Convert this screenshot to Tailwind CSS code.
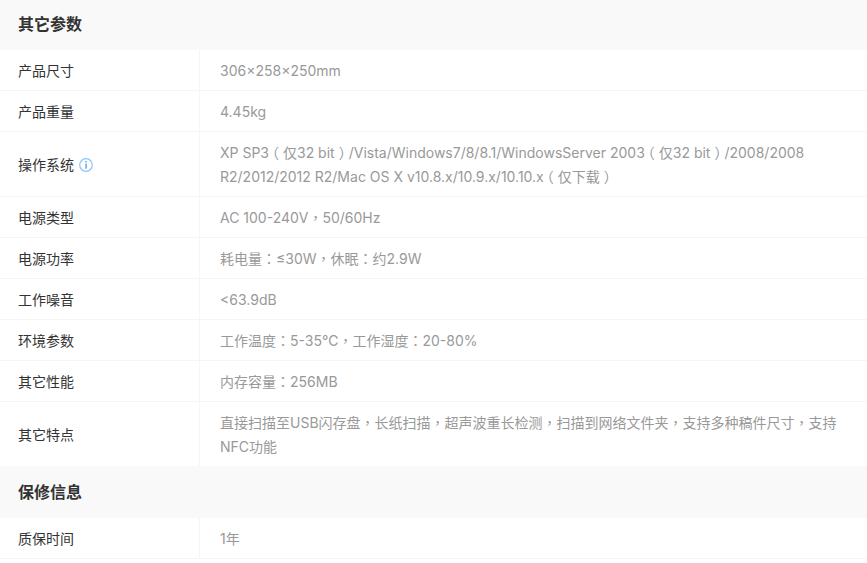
<!DOCTYPE html>
<html lang="zh-CN">
<head>
  <meta charset="UTF-8" />
  <title>参数</title>
  <script src="https://cdn.jsdelivr.net/npm/@tailwindcss/browser@4"></script>
</head>
<body class="bg-white font-['Inter','Noto_Sans_CJK_SC',sans-serif] text-[14px] leading-6 overflow-hidden">
  <h3 class="bg-[#f9f9f9] h-[50px] pl-[18px] pb-[2px] flex items-center text-[16px] font-bold text-[#333]">其它参数</h3>
  <div class="flex border-b border-[#f5f5f5]">
    <div class="w-[200px] shrink-0 pl-[18px] pt-[2px] flex items-center text-[#333] border-r border-[#f5f5f5]">产品尺寸</div>
    <div class="flex-1 pl-5 pr-[30px] pt-[9px] pb-[7px] text-[#999]">306×258×250mm</div>
  </div>
  <div class="flex border-b border-[#f5f5f5]">
    <div class="w-[200px] shrink-0 pl-[18px] pt-[2px] flex items-center text-[#333] border-r border-[#f5f5f5]">产品重量</div>
    <div class="flex-1 pl-5 pr-[30px] pt-[9px] pb-[7px] text-[#999]">4.45kg</div>
  </div>
  <div class="flex border-b border-[#f5f5f5]">
    <div class="w-[200px] shrink-0 pl-[18px] pt-[2px] flex items-center text-[#333] border-r border-[#f5f5f5]">
      操作系统
      <svg class="ml-[5px] w-[14px] h-[14px]" viewBox="0 0 14 14" fill="none">
        <circle cx="7" cy="7" r="6.3" stroke="#8cc4fb" stroke-width="1.2" />
        <rect x="6.3" y="3" width="1.5" height="1.5" fill="#5ea8f5" />
        <rect x="6.3" y="5.5" width="1.5" height="5.2" fill="#5ea8f5" />
      </svg>
    </div>
    <div class="flex-1 pl-5 pr-[30px] pt-[9px] pb-[7px] text-[#999]">XP SP3<span class="relative left-[-4px]">（</span>仅32 bit<span class="relative left-[4px]">）</span>/Vista/Windows7/8/8.1/WindowsServer 2003<span class="relative left-[-4px]">（</span>仅32 bit<span class="relative left-[4px]">）</span>/2008/2008 R2/2012/2012 R2/Mac OS X v10.8.x/10.9.x/10.10.x<span class="relative left-[-4px]">（</span>仅下载<span class="relative left-[4px]">）</span></div>
  </div>
  <div class="flex border-b border-[#f5f5f5]">
    <div class="w-[200px] shrink-0 pl-[18px] pt-[2px] flex items-center text-[#333] border-r border-[#f5f5f5]">电源类型</div>
    <div class="flex-1 pl-5 pr-[30px] pt-[9px] pb-[7px] text-[#999]">AC 100-240V<span lang="zh-TW" class="leading-none font-['Noto_Sans_CJK_TC']">，</span>50/60Hz</div>
  </div>
  <div class="flex border-b border-[#f5f5f5]">
    <div class="w-[200px] shrink-0 pl-[18px] pt-[2px] flex items-center text-[#333] border-r border-[#f5f5f5]">电源功率</div>
    <div class="flex-1 pl-5 pr-[30px] pt-[9px] pb-[7px] text-[#999]">耗电量<span lang="zh-TW" class="leading-none font-['Noto_Sans_CJK_TC']">：</span>≤30W<span lang="zh-TW" class="leading-none font-['Noto_Sans_CJK_TC']">，</span>休眠<span lang="zh-TW" class="leading-none font-['Noto_Sans_CJK_TC']">：</span>约2.9W</div>
  </div>
  <div class="flex border-b border-[#f5f5f5]">
    <div class="w-[200px] shrink-0 pl-[18px] pt-[2px] flex items-center text-[#333] border-r border-[#f5f5f5]">工作噪音</div>
    <div class="flex-1 pl-5 pr-[30px] pt-[9px] pb-[7px] text-[#999]">&lt;63.9dB</div>
  </div>
  <div class="flex border-b border-[#f5f5f5]">
    <div class="w-[200px] shrink-0 pl-[18px] pt-[2px] flex items-center text-[#333] border-r border-[#f5f5f5]">环境参数</div>
    <div class="flex-1 pl-5 pr-[30px] pt-[9px] pb-[7px] text-[#999]">工作温度<span lang="zh-TW" class="leading-none font-['Noto_Sans_CJK_TC']">：</span>5-35℃<span lang="zh-TW" class="leading-none font-['Noto_Sans_CJK_TC']">，</span>工作湿度<span lang="zh-TW" class="leading-none font-['Noto_Sans_CJK_TC']">：</span>20-80%</div>
  </div>
  <div class="flex border-b border-[#f5f5f5]">
    <div class="w-[200px] shrink-0 pl-[18px] pt-[2px] flex items-center text-[#333] border-r border-[#f5f5f5]">其它性能</div>
    <div class="flex-1 pl-5 pr-[30px] pt-[9px] pb-[7px] text-[#999]">内存容量<span lang="zh-TW" class="leading-none font-['Noto_Sans_CJK_TC']">：</span>256MB</div>
  </div>
  <div class="flex">
    <div class="w-[200px] shrink-0 pl-[18px] pt-[2px] flex items-center text-[#333] border-r border-[#f5f5f5]">其它特点</div>
    <div class="flex-1 pl-5 pr-[30px] pt-[9px] pb-[7px] text-[#999]">直接扫描至USB闪存盘<span lang="zh-TW" class="leading-none font-['Noto_Sans_CJK_TC']">，</span>长纸扫描<span lang="zh-TW" class="leading-none font-['Noto_Sans_CJK_TC']">，</span>超声波重长检测<span lang="zh-TW" class="leading-none font-['Noto_Sans_CJK_TC']">，</span>扫描到网络文件夹<span lang="zh-TW" class="leading-none font-['Noto_Sans_CJK_TC']">，</span>支持多种稿件尺寸<span lang="zh-TW" class="leading-none font-['Noto_Sans_CJK_TC']">，</span>支持NFC功能</div>
  </div>
  <h3 class="bg-[#f9f9f9] h-[52px] pl-[18px] flex items-center text-[16px] font-bold text-[#333]">保修信息</h3>
  <div class="flex border-b border-[#f5f5f5]">
    <div class="w-[200px] shrink-0 pl-[18px] pt-[2px] flex items-center text-[#333] border-r border-[#f5f5f5]">质保时间</div>
    <div class="flex-1 pl-5 pr-[30px] pt-[9px] pb-[7px] text-[#999]">1年</div>
  </div>
</body>
</html>
